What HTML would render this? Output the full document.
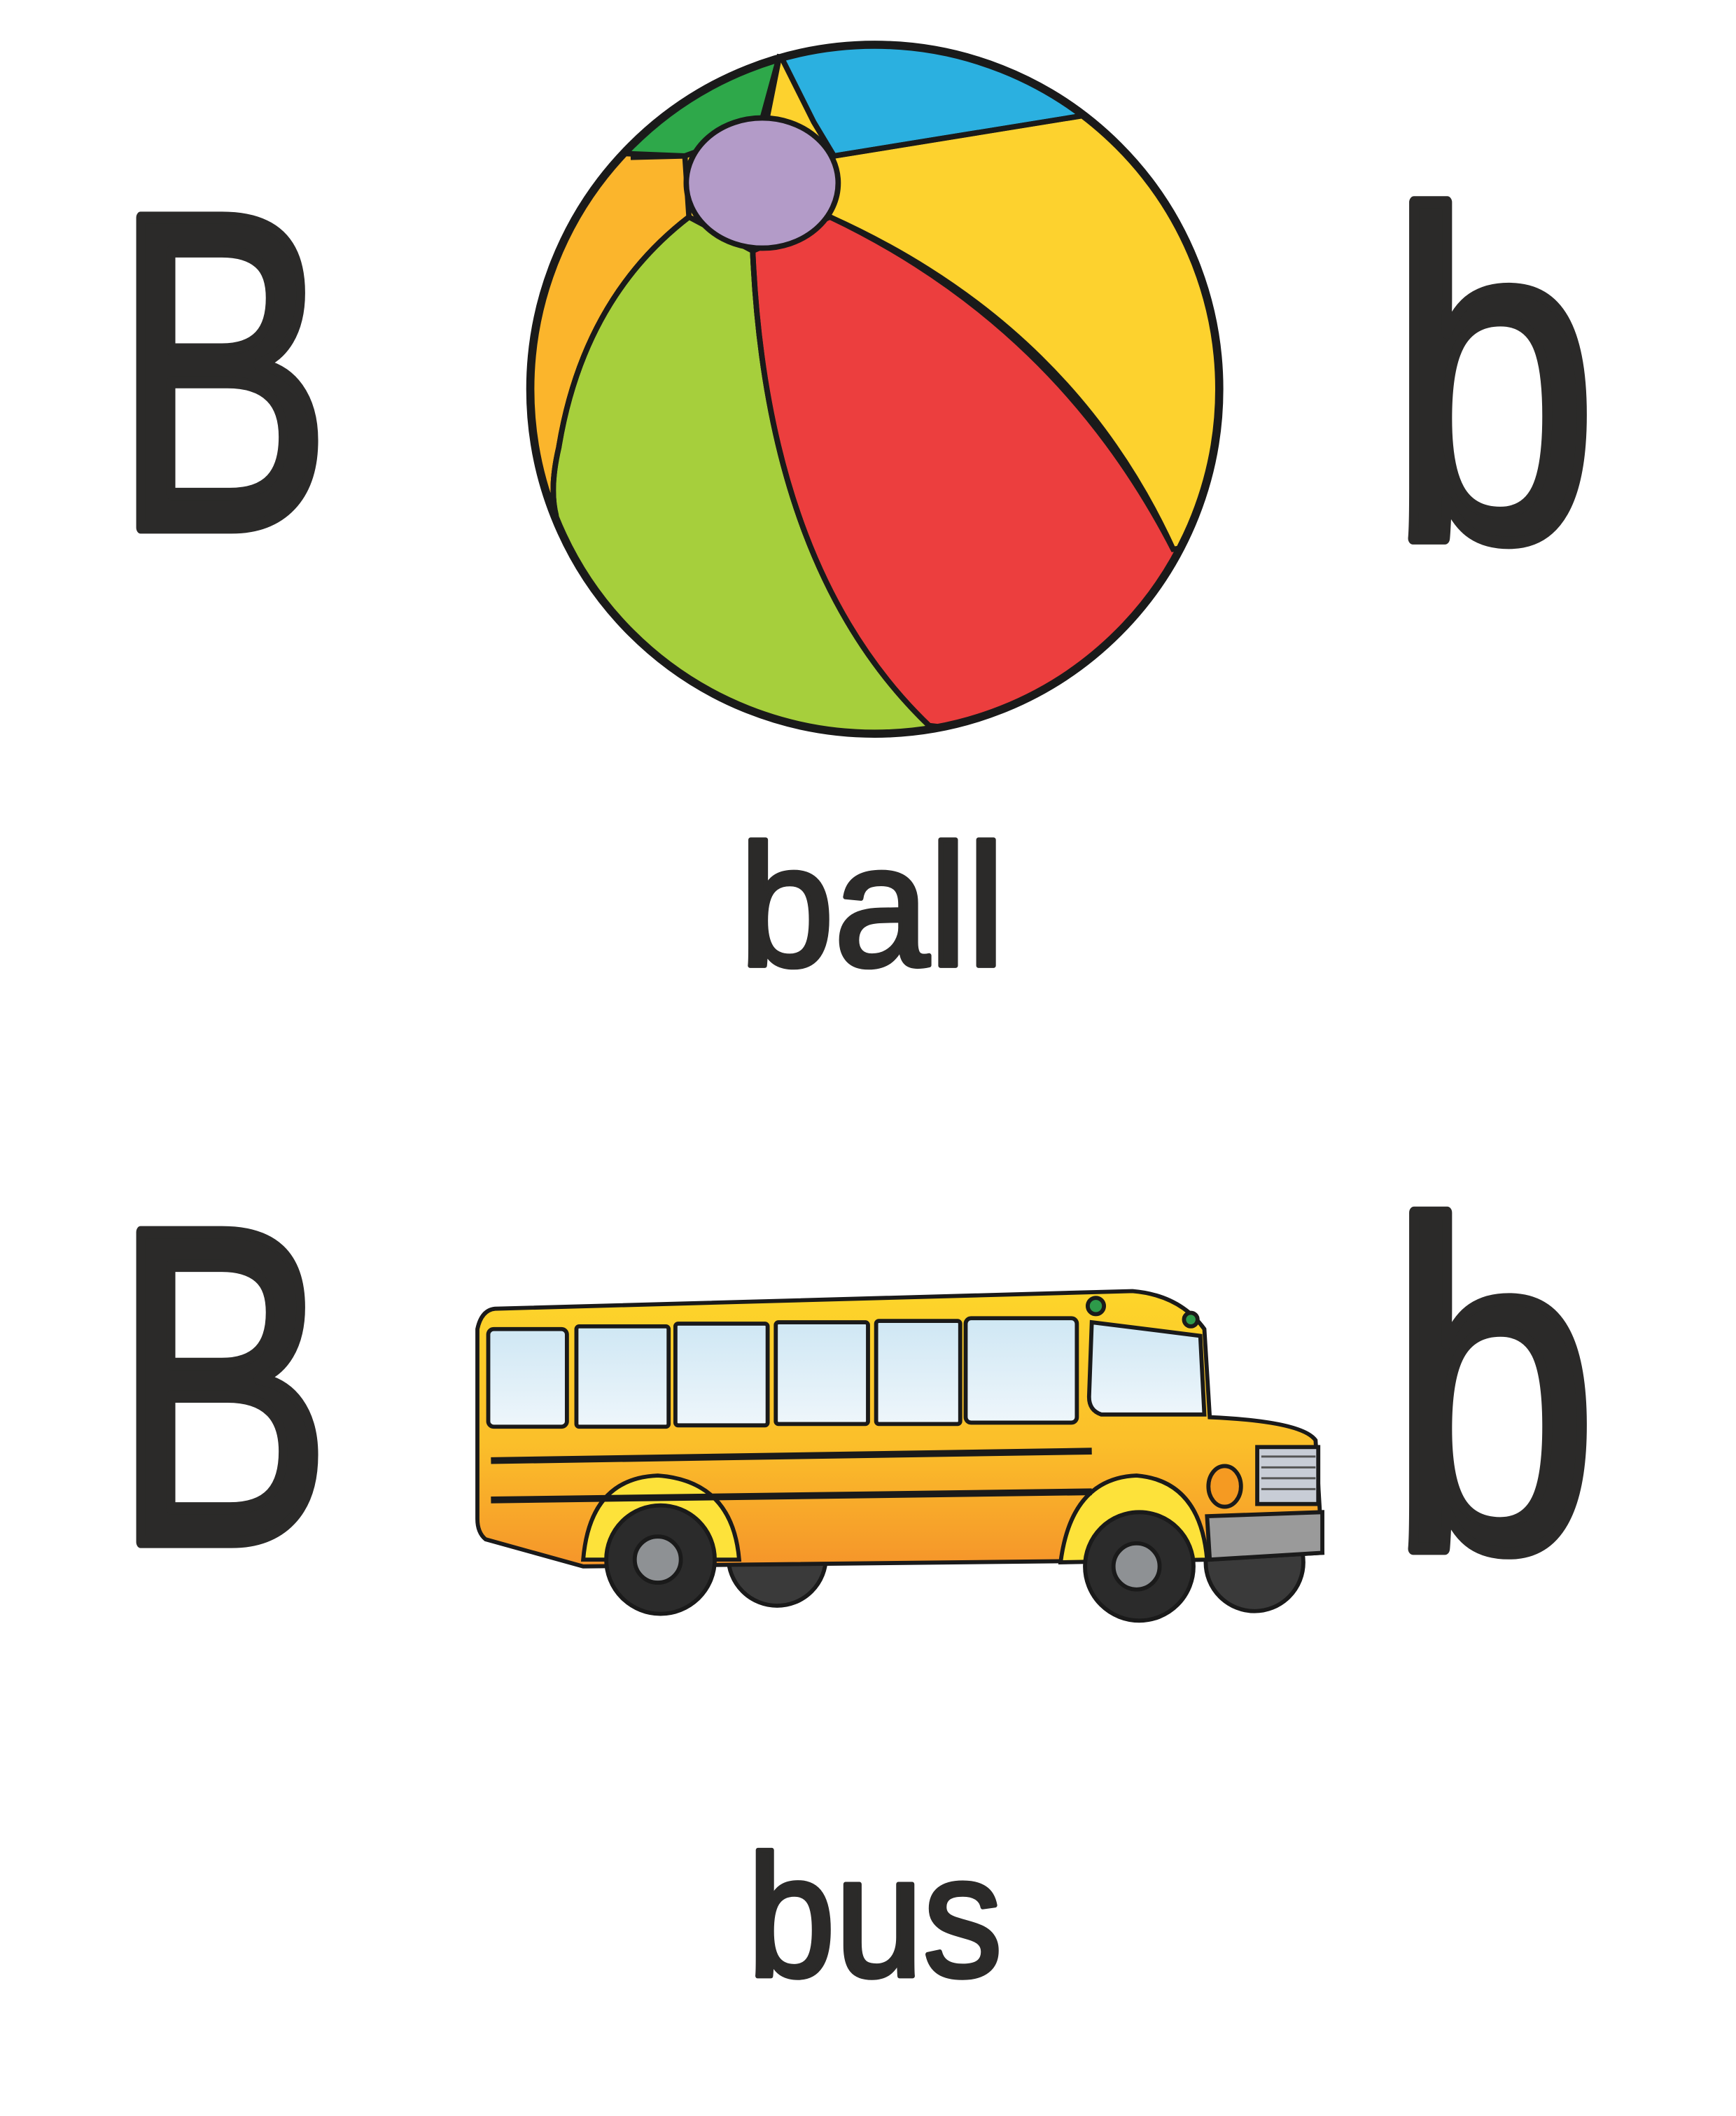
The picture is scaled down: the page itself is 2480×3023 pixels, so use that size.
<!DOCTYPE html>
<html><head><style>html,body{margin:0;padding:0;background:#fff;width:2480px;height:3023px;overflow:hidden}svg{display:block}</style></head>
<body>
<svg width="2480" height="3023" viewBox="0 0 1280 1560.26" xmlns="http://www.w3.org/2000/svg">
<defs>
<clipPath id="c"><circle cx="645" cy="287" r="253"/></clipPath>
<linearGradient id="bd" x1="0" y1="0" x2="0" y2="1"><stop offset="0" stop-color="#fdd52a"/><stop offset="0.55" stop-color="#fbbf2a"/><stop offset="1" stop-color="#f5952a"/></linearGradient>
<linearGradient id="gl" x1="0" y1="0" x2="0" y2="1"><stop offset="0" stop-color="#cfe7f4"/><stop offset="1" stop-color="#eef6fb"/></linearGradient>
</defs>
<g fill="#2b2a29" stroke="#2b2a29" stroke-linejoin="round" font-family="Liberation Sans, sans-serif">
<text x="84" y="389" font-size="332" stroke-width="9" textLength="160" lengthAdjust="spacingAndGlyphs">B</text>
<text x="1024" y="397" font-size="342" stroke-width="9" textLength="154" lengthAdjust="spacingAndGlyphs">b</text>
<text x="545" y="712" font-size="128" stroke-width="3.5" textLength="196" lengthAdjust="spacingAndGlyphs">ball</text>
<text x="84" y="1137" font-size="332" stroke-width="9" textLength="160" lengthAdjust="spacingAndGlyphs">B</text>
<text x="1024" y="1142" font-size="342" stroke-width="9" textLength="154" lengthAdjust="spacingAndGlyphs">b</text>
<text x="551" y="1457" font-size="128" stroke-width="3.5" textLength="188" lengthAdjust="spacingAndGlyphs">bus</text>
</g>
<!-- ball -->
<g clip-path="url(#c)" stroke="#1a1a1a" stroke-width="4">
<rect x="380" y="20" width="540" height="540" fill="#fdd22e" stroke="none"/>
<path d="M380 20 L575 20 L575 40 L560 95 L505 115 L465 118 L380 140Z" fill="#2ea84a"/>
<path d="M575 40 L590 20 L820 20 L800 85 L615 115 L600 90Z" fill="#2bb0e0"/>
<path d="M380 110 L505 115 L508 160 Q430 220 412 330 Q405 360 410 380 L380 560Z" fill="#fbb52c"/>
<path d="M508 160 Q430 220 412 330 Q405 360 410 380 L420 570 L700 570 L685 535 Q565 420 555 185Z" fill="#a6cf3c"/>
<path d="M555 185 Q565 420 685 535 L900 560 L900 400 L865 405 Q780 240 612 160Z" fill="#ec3e3e"/>
</g>
<g fill="none" stroke="#1a1a1a" stroke-width="4">
<path d="M508 160 Q430 220 412 330 Q405 360 410 380"/>
<path d="M555 185 Q565 420 685 535"/>
<path d="M612 160 Q790 240 865 405"/>
<path d="M575 40 L565 90"/><path d="M615 115 L800 85"/><path d="M505 115 L465 116"/>
</g>
<circle cx="645" cy="287" r="254" fill="none" stroke="#1a1a1a" stroke-width="6"/>
<ellipse cx="562" cy="135" rx="56" ry="48" fill="#b39bc8" stroke="#1a1a1a" stroke-width="4"/>
<!-- bus -->
<g stroke="#1a1a1a" stroke-width="3">
<circle cx="573" cy="1148" r="36" fill="#3a3a3a"/>
<circle cx="925" cy="1152" r="36" fill="#3a3a3a"/>
<path d="M365 965 L835 952 Q870 955 888 980 L892 1045 Q960 1048 970 1062 L975 1145 L890 1150 L430 1155 L358 1135 Q352 1130 352 1120 L352 980 Q355 966 365 965Z" fill="url(#bd)"/>
<path d="M890 1118 L975 1115 L975 1145 L892 1150Z" fill="#9a9a9a"/>
<rect x="360" y="980" width="58" height="72" rx="4" fill="url(#gl)"/>
<rect x="425" y="978" width="68" height="74" rx="2" fill="url(#gl)"/>
<rect x="498" y="976" width="68" height="75" rx="2" fill="url(#gl)"/>
<rect x="572" y="975" width="68" height="75" rx="2" fill="url(#gl)"/>
<rect x="646" y="974" width="62" height="76" rx="2" fill="url(#gl)"/>
<rect x="712" y="972" width="82" height="77" rx="4" fill="url(#gl)"/>
<path d="M805 975 L885 985 L888 1043 L812 1043 Q803 1040 803 1030Z" fill="url(#gl)"/>
<rect x="927" y="1067" width="45" height="42" fill="#c8cdd6"/>
<ellipse cx="903" cy="1096" rx="12" ry="15" fill="#f59a22"/>
<path d="M430 1150 Q435 1090 485 1088 Q540 1092 545 1150Z" fill="#fde23a"/>
<path d="M782 1152 Q790 1090 838 1088 Q885 1092 890 1150Z" fill="#fde23a"/>
<circle cx="487" cy="1150" r="40" fill="#2b2b2b"/>
<circle cx="485" cy="1150" r="17" fill="#8e9194"/>
<circle cx="840" cy="1155" r="40" fill="#2b2b2b"/>
<circle cx="838" cy="1155" r="17" fill="#8e9194"/>
<circle cx="808" cy="963" r="6" fill="#2e9a4a"/>
<circle cx="878" cy="973" r="5" fill="#2e9a4a"/>
</g>
<g stroke="#1a1a1a" stroke-width="5">
<line x1="362" y1="1077" x2="805" y2="1070"/>
<line x1="362" y1="1106" x2="805" y2="1100"/>
</g>
<g stroke="#555" stroke-width="1.5">
<line x1="930" y1="1074" x2="970" y2="1074"/><line x1="930" y1="1082" x2="970" y2="1082"/><line x1="930" y1="1090" x2="970" y2="1090"/><line x1="930" y1="1098" x2="970" y2="1098"/>
</g>
</svg>
</body></html>
